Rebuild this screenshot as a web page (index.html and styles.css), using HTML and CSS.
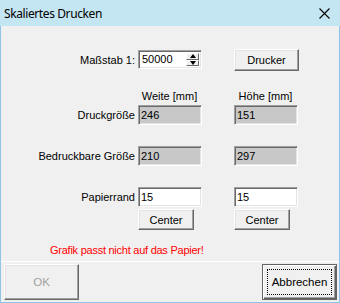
FILE: index.html
```html
<!DOCTYPE html>
<html>
<head>
<meta charset="utf-8">
<link rel="stylesheet" href="styles.css">
</head>
<body>
<div class="window">
  <div class="titlebar">
    <span class="title">Skaliertes Drucken</span>
    <svg class="close" width="11" height="11" viewBox="0 0 11 11"><path d="M0.5 0.5 L10.5 10.5 M10.5 0.5 L0.5 10.5" stroke="#000" stroke-width="1.1" fill="none"/></svg>
  </div>
  <div class="content">
    <div class="form">
      <div class="row row-scale">
        <span class="label">Maßstab 1:</span>
        <div class="spin">
          <span class="spin-value">50000</span>
          <div class="spin-buttons">
            <div class="spin-btn"><span class="arrow up"></span></div>
            <div class="spin-btn"><span class="arrow down"></span></div>
          </div>
        </div>
        <div class="button btn-drucker">Drucker</div>
      </div>
      <div class="row row-head">
        <span></span>
        <span class="head">Weite [mm]</span>
        <span class="head">Höhe [mm]</span>
      </div>
      <div class="row row-field">
        <span class="label">Druckgröße</span>
        <div class="field readonly">246</div>
        <div class="field readonly">151</div>
      </div>
      <div class="row row-field gap">
        <span class="label">Bedruckbare Größe</span>
        <div class="field readonly">210</div>
        <div class="field readonly">297</div>
      </div>
      <div class="row row-field gap">
        <span class="label">Papierrand</span>
        <div class="field">15</div>
        <div class="field">15</div>
      </div>
      <div class="row row-center">
        <span></span>
        <div class="button btn-center">Center</div>
        <div class="button btn-center">Center</div>
      </div>
      <div class="message">Grafik passt nicht auf das Papier!</div>
    </div>
    <div class="bottom">
      <div class="button btn-big disabled">OK</div>
      <div class="button btn-big default"><span class="focus">Abbrechen</span></div>
    </div>
  </div>
</div>
</body>
</html>
```
FILE: styles.css
```css
html, body {
  margin: 0;
  padding: 0;
  background: #f0f0f0;
}
.window {
  width: 340px;
  height: 303px;
  box-sizing: border-box;
  border: 1px solid #8cc6e4;
  border-top: none;
  background: #f0f0f0;
  display: flex;
  flex-direction: column;
  font-family: "Liberation Sans", Arial, sans-serif;
  font-size: 11px;
  color: #000;
}
.titlebar {
  height: 26px;
  flex: none;
  background: #c4e5f2;
  display: flex;
  align-items: center;
  justify-content: space-between;
  padding: 0 10px 0 4px;
  margin: 0 -1px;
}
.title {
  font-family: "Noto Sans", sans-serif;
  font-size: 12px;
  letter-spacing: -0.4px;
  color: #000;
}
.close {
  display: block;
  margin-top: 1px;
}
.content {
  flex: 1;
  display: flex;
  flex-direction: column;
}
.form {
  padding-top: 23px;
  flex: 1;
}
.row {
  display: grid;
  grid-template-columns: 137px 96px 1fr;
  align-items: center;
}
.label {
  text-align: right;
  padding-right: 3px;
  white-space: nowrap;
}
.row-scale {
  height: 22px;
}
.spin {
  width: 64px;
  height: 19px;
  box-sizing: border-box;
  align-self: start;
  margin-top: 1px;
  background: #fff;
  border-top: 1px solid #a0a0a0;
  border-left: 1px solid #a0a0a0;
  border-right: 1px solid #fff;
  border-bottom: 1px solid #fff;
  box-shadow: inset 1px 1px #696969, inset -1px -1px #e3e3e3;
  display: flex;
  justify-content: space-between;
  padding: 2px 2px 2px 3px;
  line-height: 13px;
}
.spin-buttons {
  width: 13px;
  display: flex;
  flex-direction: column;
}
.spin-btn {
  flex: 1;
  background: #f0f0f0;
  box-sizing: border-box;
  border-top: 1px solid #fff;
  border-left: 1px solid #fff;
  border-right: 1px solid #696969;
  border-bottom: 1px solid #696969;
  display: flex;
  align-items: center;
  justify-content: center;
}
.arrow {
  width: 0;
  height: 0;
  border-left: 3.5px solid transparent;
  border-right: 3.5px solid transparent;
}
.arrow.up {
  border-bottom: 4px solid #000;
}
.arrow.down {
  border-top: 4px solid #000;
}
.button {
  box-sizing: border-box;
  background: #f0f0f0;
  border-top: 1px solid #fff;
  border-left: 1px solid #fff;
  border-right: 1px solid #696969;
  border-bottom: 1px solid #696969;
  box-shadow: inset -1px -1px #a0a0a0, inset 1px 1px #e3e3e3;
  display: flex;
  align-items: center;
  justify-content: center;
}
.btn-drucker {
  width: 65px;
  height: 22px;
}
.row-head {
  margin-top: 20px;
  margin-bottom: 4px;
  height: 10px;
  line-height: 10px;
}
.head {
  width: 63px;
  text-align: center;
  white-space: nowrap;
}
.row-field {
  height: 20px;
}
.row-field.gap {
  margin-top: 21px;
}
.field {
  width: 64px;
  height: 20px;
  box-sizing: border-box;
  background: #fff;
  border-top: 1px solid #a0a0a0;
  border-left: 1px solid #a0a0a0;
  border-right: 1px solid #fff;
  border-bottom: 1px solid #fff;
  box-shadow: inset 1px 1px #696969, inset -1px -1px #e3e3e3;
  padding: 3px 3px 0 2px;
  line-height: 13px;
}
.field.readonly {
  background: #c8c8c8;
}
.row-center {
  margin-top: 2px;
  height: 21px;
}
.btn-center {
  width: 56px;
  height: 21px;
}
.message {
  margin-top: 14px;
  padding-left: 49px;
  color: #ff0000;
  line-height: 13px;
  letter-spacing: -0.25px;
}
.bottom {
  flex: none;
  height: 41px;
  box-sizing: border-box;
  border-top: 1px solid #fff;
  display: flex;
  justify-content: space-between;
  align-items: flex-start;
  padding: 2px 2px 0 3px;
}
.btn-big {
  width: 75px;
  height: 36px;
  font-size: 11.5px;
}
.disabled {
  color: #a0a0a0;
}
.default {
  border: 1px solid #646464;
  box-shadow: inset 1px 1px #fff, inset -1px -1px #646464, inset -2px -2px #a0a0a0;
  padding: 4px;
}
.focus {
  flex: 1;
  align-self: stretch;
  border: 1px dotted #000;
  display: flex;
  align-items: center;
  justify-content: center;
}
```
